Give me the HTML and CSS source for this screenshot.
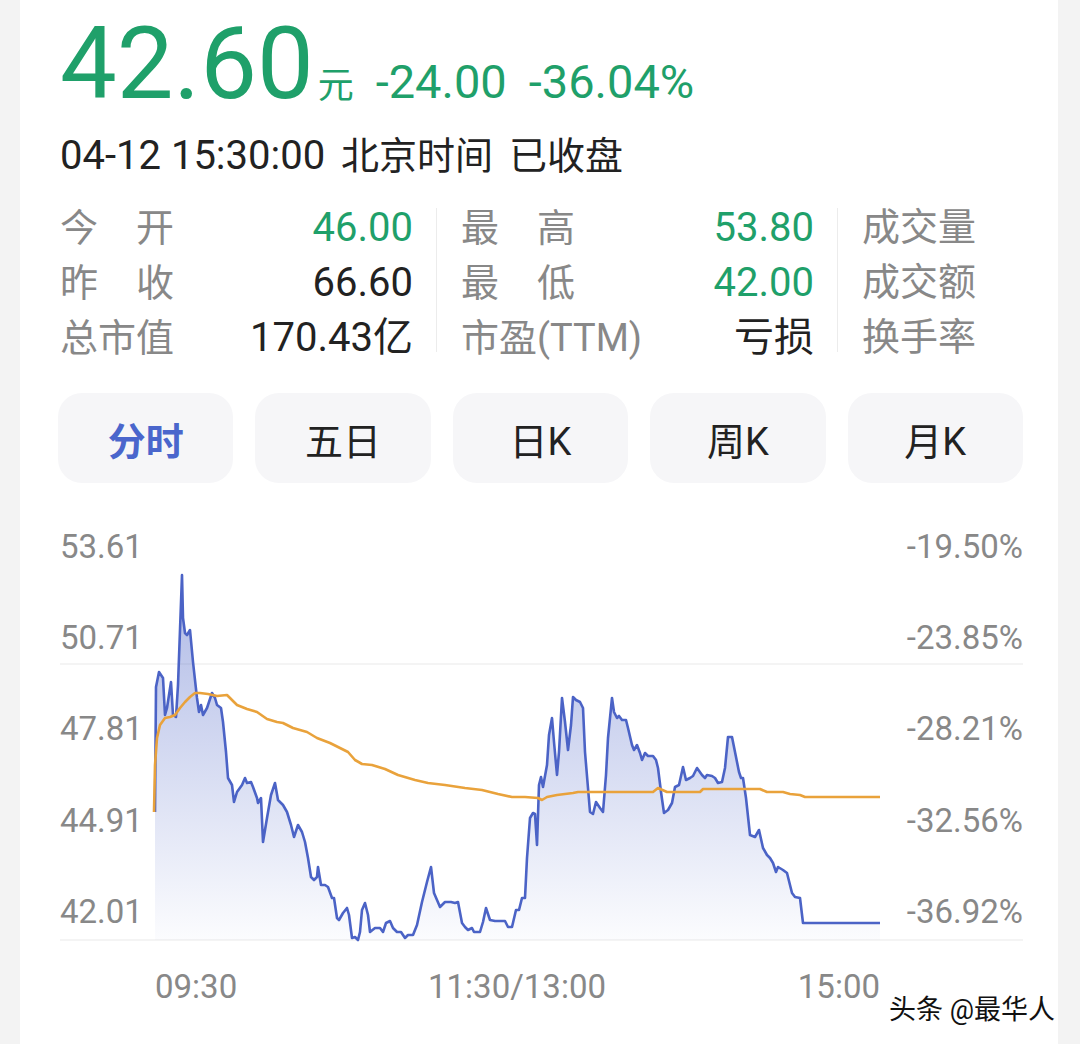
FILE: index.html
```html
<!DOCTYPE html>
<html>
  <head>
    <meta name="viewport" content="width=device-width, initial-scale=1.0">
    <title>分时</title>
    <link rel="stylesheet" href="styles.css">
  </head>
  <body>
    <div class="panel">
      <div class="quote">
        <span class="price">42.60</span>
        <span class="unit">元</span>
        <span class="change">-24.00</span>
        <span class="change">-36.04%</span>
      </div>
      <div class="time">
        <span>04-12 15:30:00</span>
        <span class="gap">北京时间</span>
        <span class="gap">已收盘</span>
      </div>

      <div class="stats">
        <div class="col">
          <div class="row"><span class="label">今 开</span><span class="value down">46.00</span></div>
          <div class="row"><span class="label">昨 收</span><span class="value">66.60</span></div>
          <div class="row"><span class="label">总市值</span><span class="value">170.43亿</span></div>
        </div>
        <div class="divider"></div>
        <div class="col">
          <div class="row"><span class="label">最 高</span><span class="value down">53.80</span></div>
          <div class="row"><span class="label">最 低</span><span class="value down">42.00</span></div>
          <div class="row"><span class="label">市盈(TTM)</span><span class="value">亏损</span></div>
        </div>
        <div class="divider"></div>
        <div class="col">
          <div class="row"><span class="label">成交量</span></div>
          <div class="row"><span class="label">成交额</span></div>
          <div class="row"><span class="label">换手率</span></div>
        </div>
      </div>

      <div class="tabs">
        <div class="tab active">分时</div>
        <div class="tab">五日</div>
        <div class="tab">日K</div>
        <div class="tab">周K</div>
        <div class="tab">月K</div>
      </div>

      <svg class="chart" width="963" height="561" viewBox="60 483 963 561">
        <defs>
          <linearGradient id="fill" x1="0" y1="0" x2="0" y2="1">
            <stop offset="0" stop-color="#4b63c6" stop-opacity="0.45"/>
            <stop offset="1" stop-color="#4b63c6" stop-opacity="0.02"/>
          </linearGradient>
        </defs>
        <line class="grid" x1="60" y1="664" x2="1023" y2="664"/>
        <line class="grid" x1="60" y1="940" x2="1023" y2="940"/>

        <text class="axis" x="60" y="558">53.61</text>
        <text class="axis" x="60" y="649">50.71</text>
        <text class="axis" x="60" y="740">47.81</text>
        <text class="axis" x="60" y="832">44.91</text>
        <text class="axis" x="60" y="923">42.01</text>
        <text class="axis" x="1023" y="558" text-anchor="end">-19.50%</text>
        <text class="axis" x="1023" y="649" text-anchor="end">-23.85%</text>
        <text class="axis" x="1023" y="740" text-anchor="end">-28.21%</text>
        <text class="axis" x="1023" y="832" text-anchor="end">-32.56%</text>
        <text class="axis" x="1023" y="923" text-anchor="end">-36.92%</text>
        <text class="axis" x="155" y="998">09:30</text>
        <text class="axis" x="517" y="998" text-anchor="middle">11:30/13:00</text>
        <text class="axis" x="880" y="998" text-anchor="end">15:00</text>

        <polygon id="area" fill="url(#fill)" points=""/>
        <polyline id="price-line" class="price-line" points="155,812 156,687 159,672 163,678 165,715 167,708 171,682 173,715 176,717 178,685 182,575 183,618 185,633 187,635 190,630 193,662 197,698 199,712 201,705 203,715 207,708 209,702 212,693 215,698 217,705 221,708 223,722 226,752 228,778 232,785 234,802 237,792 242,785 245,778 247,783 251,782 253,787 257,798 258,803 261,798 263,842 267,818 271,795 275,783 278,800 283,805 287,812 291,825 294,837 298,825 302,832 305,842 308,858 311,877 314,880 317,877 318,867 321,885 325,885 328,887 332,898 334,898 337,918 339,920 343,913 347,908 349,915 352,938 355,937 358,940 360,932 362,910 365,903 368,915 370,932 375,928 380,928 383,932 386,923 390,921 393,928 397,932 401,932 405,938 408,935 413,935 417,925 422,902 427,882 431,867 434,893 437,900 440,907 445,902 451,902 455,903 458,902 462,923 465,927 468,930 472,928 474,932 480,932 483,922 486,908 490,920 495,921 505,921 508,927 512,927 516,910 519,910 522,898 525,898 527,858 530,818 533,813 535,814 537,845 539,785 541,777 543,787 547,765 549,735 552,718 554,742 557,775 559,752 562,698 565,722 568,750 571,725 573,697 576,700 580,702 583,708 585,752 588,788 590,812 593,814 596,802 600,808 603,812 606,775 608,738 612,698 614,712 617,718 619,716 622,720 626,720 628,728 632,745 634,750 637,745 640,753 642,760 645,753 648,756 653,756 656,760 658,768 661,792 664,813 668,810 672,803 675,787 679,785 683,767 686,780 690,778 693,776 697,768 702,775 705,778 707,775 712,776 715,778 718,783 722,782 725,768 728,737 732,737 736,757 739,772 741,778 743,778 746,798 750,835 755,837 759,830 763,848 767,855 770,858 773,863 776,872 778,867 783,870 787,873 792,893 795,897 800,898 803,923 880,923"/>
        <polyline class="avg-line" points="154,812 155,765 157,738 160,725 165,718 170,717 175,715 180,708 185,702 190,697 195,693 200,693 208,694 217,696 227,695 230,698 237,705 247,709 257,712 267,719 277,722 283,723 293,728 307,732 317,738 330,743 340,748 348,752 355,760 362,764 372,765 385,769 398,775 415,780 428,783 445,785 465,788 482,790 498,794 512,797 525,797 538,798 542,800 547,797 557,795 573,793 578,792 653,792 658,788 667,792 700,792 703,789 760,789 767,792 783,792 790,794 800,795 805,797 880,797"/>
      </svg>

      <div class="watermark">头条 @最华人</div>
    </div>
    <script>
      // fill under the price line, closed down to the bottom grid line
      const linea = document.getElementById("price-line");
      const pts = linea.getAttribute("points");
      document.getElementById("area").setAttribute("points", "155,940 " + pts + " 880,940");
    </script>
  </body>
</html>
```

FILE: styles.css
```css
body {
  margin: 0;
  background-color: #f3f3f3;
  font-family: Roboto, "Noto Sans CJK SC", sans-serif;
}
.panel {
  position: relative;
  width: 1038px;
  min-height: 1044px;
  margin-left: 20px;
  padding: 13px 35px 0 40px;
  box-sizing: border-box;
  background-color: #fff;
  overflow: hidden;
}
.quote {
  display: flex;
  align-items: baseline;
  color: #1fa06a;
}
.price {
  font-size: 101px;
  line-height: 1;
}
.unit {
  font-size: 36px;
  line-height: 1;
  margin-left: 4px;
}
.change {
  font-size: 47px;
  line-height: 1;
  margin-left: 22px;
}
.time {
  margin-top: 18px;
  font-size: 40px;
  line-height: 48px;
  color: #222;
  white-space: nowrap;
}
.time .gap {
  margin-left: 6px;
  font-size: 38px;
}
.stats {
  display: flex;
  margin-top: 20px;
  white-space: nowrap;
}
.col {
  flex: 0 0 353px;
}
.row {
  display: flex;
  justify-content: space-between;
  align-items: baseline;
  height: 55px;
  line-height: 55px;
  font-size: 40px;
}
.label {
  flex-shrink: 0;
  min-width: 3em;
  font-size: 38px;
  text-align-last: justify;
  color: #888;
}
.value {
  color: #222;
}
.value.down {
  color: #1fa06a;
}
.divider {
  flex: 0 0 1px;
  margin: 8px 24px 13px 23px;
  background-color: #ececec;
}
.tabs {
  display: grid;
  grid-template-columns: repeat(5, 1fr);
  gap: 22px;
  margin: 28px 0 0 -2px;
}
.tab {
  display: flex;
  align-items: center;
  justify-content: center;
  height: 90px;
  border-radius: 24px;
  background-color: #f6f6f8;
  font-size: 38px;
  color: #222;
}
.tab.active {
  color: #4a66cc;
  font-weight: bold;
}
.chart {
  display: block;
}
.chart .grid {
  stroke: #f0f0f0;
  stroke-width: 1.5;
}
.chart .axis {
  font-family: Roboto, sans-serif;
  font-size: 33px;
  fill: #888;
}
.price-line {
  fill: none;
  stroke: #4b63c6;
  stroke-width: 2.6;
  stroke-linejoin: round;
}
.avg-line {
  fill: none;
  stroke: #e9a23b;
  stroke-width: 2.6;
  stroke-linejoin: round;
}
.watermark {
  position: absolute;
  top: 988px;
  right: 3px;
  font-size: 27px;
  color: #111;
  text-shadow: 0 0 2px #fff, 0 0 2px #fff;
}
```
